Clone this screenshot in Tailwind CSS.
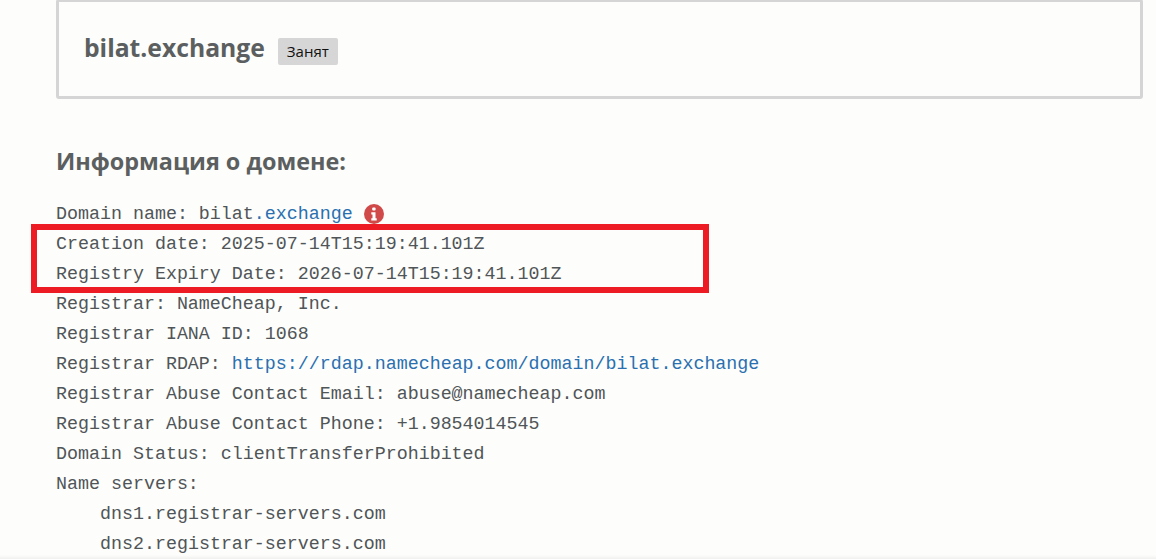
<!DOCTYPE html>
<html lang="en">

<head>
    <meta charset="UTF-8">
    <title>bilat.exchange</title>
    <script src="https://cdn.jsdelivr.net/npm/@tailwindcss/browser@4"></script>
</head>

<body class="bg-[#fdfdfb] h-[559px] overflow-hidden font-['Open_Sans',sans-serif]">
    <div class="relative h-[559px] overflow-hidden pl-[56px] pr-[13px]">
        <!-- Domain card -->
        <div class="mt-[-1px] h-[100px] border-[3px] border-[#d5d5d5] rounded-[3px] flex items-center pl-[25px] pt-[2px]">
            <h1 class="text-[24.7px] leading-[32px] font-bold text-[#5c5f5f] mb-[5px]">bilat.exchange</h1>
            <span class="ml-[13px] mt-[2px] bg-[#d6d6d6] rounded-[2px] h-[27px] px-[9px] text-[15px] leading-[27px] text-[#111]">Занят</span>
        </div>

        <h2 class="mt-[47px] text-[23.4px] leading-[30px] font-bold text-[#5c5f5f]">Информация о домене:</h2>

        <!-- Whois -->
        <div class="mt-[24px] font-['Liberation_Mono',monospace] text-[18.32px] leading-[30px] text-[#505558]">
            <div class="flex items-center whitespace-pre">Domain name: bilat<a class="text-[#2a70b0]">.exchange</a><svg class="ml-[11px] mt-[-2px]" width="20" height="20" viewBox="0 0 20 20"><circle cx="10" cy="10" r="10" fill="#d04a4a"/><rect x="8.2" y="3.5" width="3.4" height="3" rx="1" fill="#fff"/><path d="M7.3 8.2h4.2v6h1.2v2.2H7.3v-2.2h1.2v-3.8H7.3z" fill="#fff"/></svg></div>
            <div>Creation date: 2025-07-14T15:19:41.101Z</div>
            <div>Registry Expiry Date: 2026-07-14T15:19:41.101Z</div>
            <div>Registrar: NameCheap, Inc.</div>
            <div>Registrar IANA ID: 1068</div>
            <div>Registrar RDAP: <a class="text-[#2a70b0]">https://rdap.namecheap.com/domain/bilat.exchange</a></div>
            <div>Registrar Abuse Contact Email: abuse@namecheap.com</div>
            <div>Registrar Abuse Contact Phone: +1.9854014545</div>
            <div>Domain Status: clientTransferProhibited</div>
            <div>Name servers:</div>
            <div class="pl-[44px]">dns1.registrar-servers.com</div>
            <div class="pl-[44px]">dns2.registrar-servers.com</div>
        </div>

        <!-- Red annotation frame -->
        <div class="absolute left-[31px] top-[224px] w-[678px] h-[69px] border-[6px] border-[#ed1c24]"></div>
        <!-- Faint shade at the bottom edge -->
        <div class="absolute left-0 right-0 bottom-0 h-[4px] bg-linear-to-b from-transparent to-black/5"></div>
    </div>
</body>

</html>
